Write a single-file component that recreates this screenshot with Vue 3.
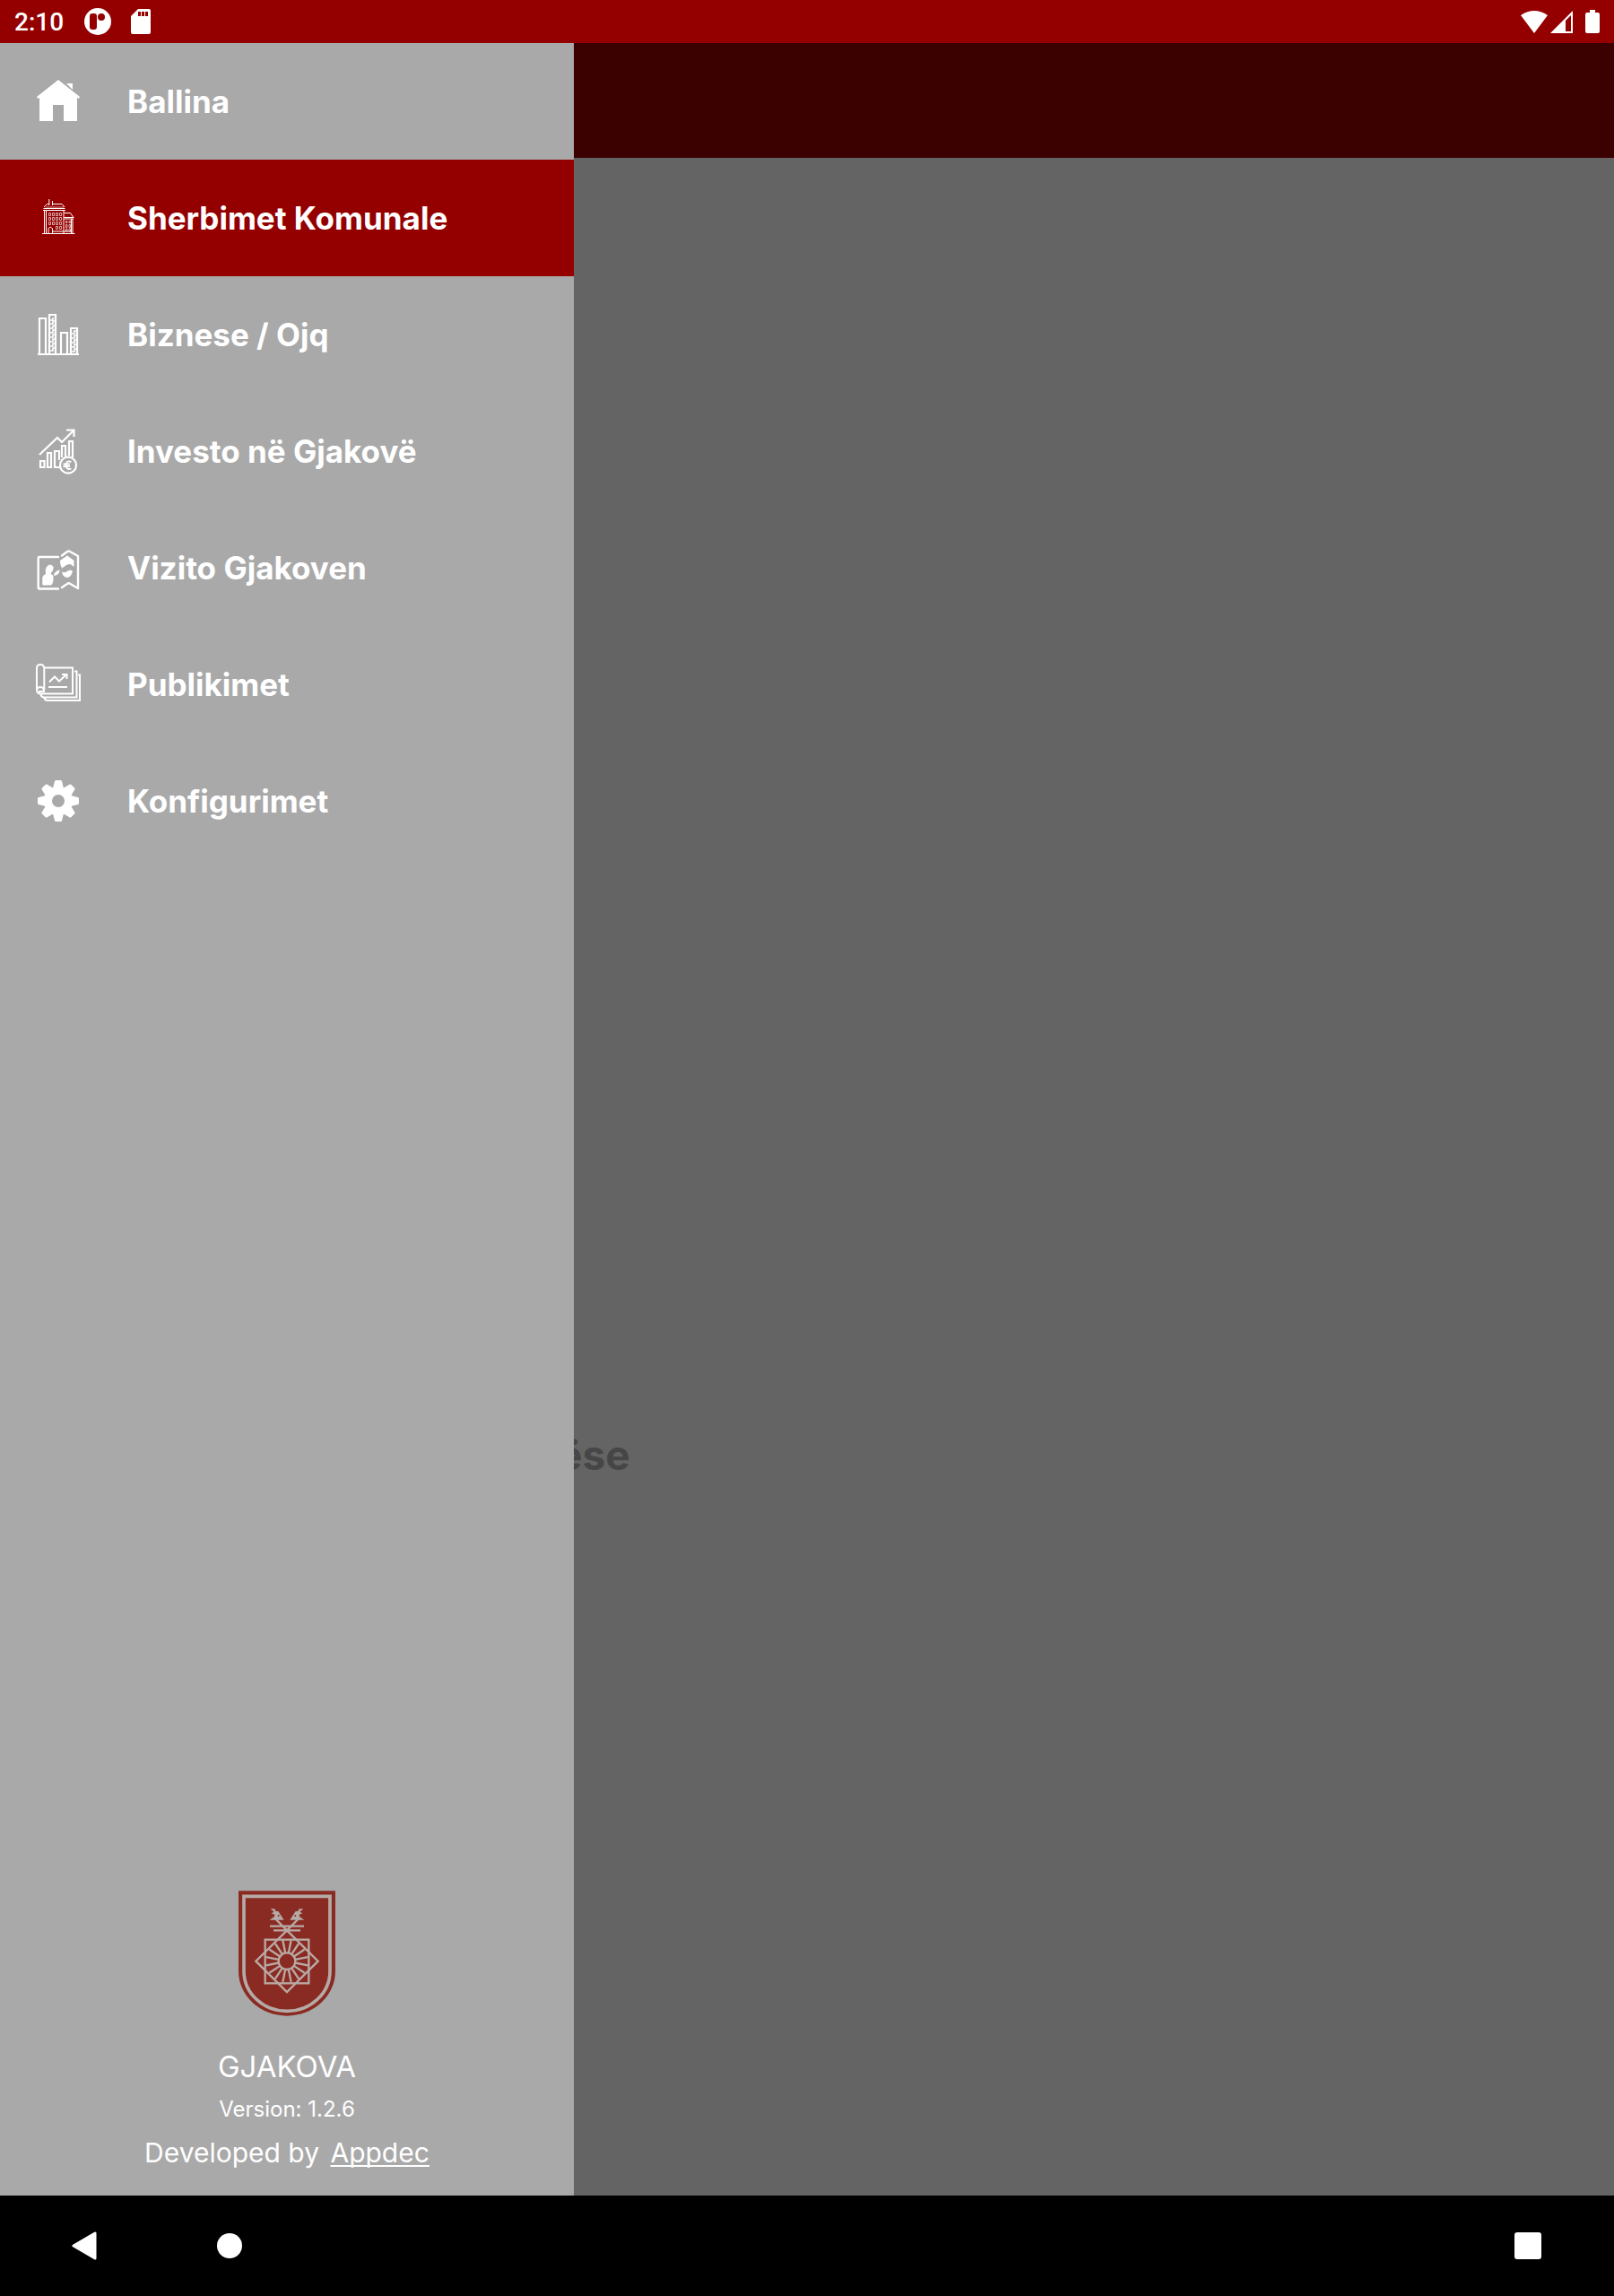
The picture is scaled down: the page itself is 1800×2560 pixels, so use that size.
<template>
  <div class="screen">
    <header class="status-bar">
      <time class="clock">2:10</time>
      <svg class="app-icon" viewBox="0 0 30 30" aria-hidden="true">
        <circle cx="15" cy="15" r="15" fill="#fff" />
        <rect x="6" y="6" width="8" height="18" rx="3" fill="#940000" />
        <circle cx="19" cy="10" r="4" fill="#940000" />
      </svg>
      <svg class="card-icon" viewBox="0 0 22 28" aria-hidden="true">
        <path d="M8 0H20Q22 0 22 2V26Q22 28 20 28H2Q0 28 0 26V8Z" fill="#fff" />
        <path d="M8 3h3v5h-3zM12 3h3v5h-3zM16 3h3v5h-3z" fill="#940000" />
      </svg>
      <div class="status-right">
        <svg class="wifi-icon" viewBox="0 0 30 25" aria-hidden="true">
          <path d="M0 5Q15 -5 30 5L15 25Z" fill="#fff" />
        </svg>
        <svg class="signal-icon" viewBox="0 0 25 25" aria-hidden="true">
          <path d="M25 0V25H0Z" fill="#fff" />
          <path d="M17 11L23 5V23H17Z" fill="#940000" />
        </svg>
        <svg class="battery-icon" viewBox="0 0 16 26" aria-hidden="true">
          <path d="M5 0H11V3H14Q16 3 16 5V24Q16 26 14 26H2Q0 26 0 24V5Q0 3 2 3H5Z" fill="#fff" />
        </svg>
      </div>
    </header>

    <div class="stage">
      <div class="toolbar"></div>
      <main class="content">
        <h1 class="page-text">ëse</h1>
      </main>

      <aside class="drawer">
        <nav class="menu">
          <a
            v-for="item in items"
            :key="item.id"
            href="#"
            class="menu-item"
            :class="{ active: item.id === selected }"
            @click.prevent="selected = item.id"
          >
            <svg class="menu-icon" viewBox="0 0 60 60" aria-hidden="true">
              <g v-if="item.id === 'home'" fill="#fff">
                <path d="M30 6L54 25L53 27L51 26V52H36V34H24V52H9V26L7 27L6 25Z" />
                <path d="M39 10H46V17Z" />
              </g>

              <g v-else-if="item.id === 'services'" fill="none" stroke="#fff">
                <path d="M12 47.5H48.5" stroke-width="1.2" />
                <path d="M14.5 22V47M16.5 22V47M36 22V47M46 31V47M44.5 31V47" />
                <path d="M13 21.5H38M13.5 19.5H37.5M14 18L17.5 14.5H20M24 14.5H34L37 18" />
                <path d="M19.8 9V16M23.5 11V16" />
                <path d="M16 18H36" stroke-opacity="0.6" />
                <path d="M36.5 24.5H43.5L46.5 29M36.5 29.5H47.5M36.5 31H47" />
                <path
                  d="M19.5 24.5h2v3h-2zM23.5 24.5h2v3h-2zM27.5 24.5h2v3h-2zM31.5 24.5h2v3h-2zM19.5 29.5h2v3h-2zM23.5 29.5h2v3h-2zM27.5 29.5h2v3h-2zM31.5 29.5h2v3h-2zM19.5 34.5h2v3h-2zM23.5 34.5h2v3h-2zM27.5 34.5h2v3h-2zM31.5 34.5h2v3h-2zM27.5 39.5h2v3h-2zM31.5 39.5h2v3h-2z"
                  stroke-opacity="0.65"
                />
                <path
                  d="M38.5 33.5h1.5v2h-1.5zM42 33.5h1.5v2h-1.5zM38.5 37.5h1.5v3h-1.5zM42 37.5h1.5v3h-1.5zM38.5 42h1.5v3h-1.5zM42 42h1.5v3h-1.5z"
                  stroke-opacity="0.65"
                />
                <path d="M19 47V42Q21 38.5 23.5 42V47M24 45H44" />
              </g>

              <g v-else-if="item.id === 'business'" fill="none" stroke="#fff" stroke-width="2.2">
                <path d="M7 52H53" />
                <path d="M9 51V12H16V51M20 51V8H27V51M33 51V28H40V51M44 51V23H51V51" />
                <path
                  d="M24 11v3h-3M26 15h-2v3h-3M26 20h-2v3h-3M26 25h-2v3h-3M26 30h-2v3h-3M26 35h-2v3h-3M26 40h-2v3h-3M26 45h-2v3h-3M50 26h-2v3h-3M50 31h-2v3h-3M50 36h-2v3h-3M50 41h-2v3h-3M50 46h-2v3h-3"
                  stroke-width="1.6"
                />
              </g>

              <g v-else-if="item.id === 'invest'" fill="none" stroke="#fff" stroke-width="2.2">
                <path d="M9 34L29 15L34 20L47 7M39 6.5H47.5V14" />
                <path d="M10 41H14.5V48H10ZM18 32H22V48H18ZM31 40V30H26V48H32M34 37V24H38V36M42 35V19H46V37" />
                <circle cx="41" cy="45.7" r="9" />
                <path d="M44.5 42Q39 39.500 38.500 45.7Q39 51.500 44.5 49.500M35.500 44.5H43M35.500 47H43" stroke-width="1.8" />
              </g>

              <g
                v-else-if="item.id === 'visit'"
                fill="none"
                stroke="#fff"
                stroke-width="2.4"
                stroke-linecap="round"
                stroke-linejoin="round"
              >
                <path d="M30 18H9Q7.7 18 7.7 20V52Q7.7 53.5 9 53.5H30" />
                <path d="M34 16.5L40 12Q41.7 11 43 12L52 17V53L43.5 48Q41.7 46.5 40 48L34 52" />
                <g fill="#fff" stroke="none">
                  <path d="M12.3 49V41Q13 38 16 37Q15 31 17.5 28.5C20 25 25.5 27 24.5 31Q24 34 21.5 36.5L24.5 39Q25 47 22 49.5H13Z" />
                  <path d="M25 39Q25 34 31.5 32.5Q31.5 38 25 39Z" />
                  <path d="M32 22L40 16.5L47.5 22V29L43.5 26L40 26.5L34 30.5Q31.5 26 32 22Z" />
                  <path d="M34 34.5Q38 36 40 34Q43 32 46 33.5Q45 40 40 41Q35 41 34 34.5Z" />
                </g>
              </g>

              <g v-else-if="item.id === 'publish'" fill="none" stroke="#fff" stroke-width="2">
                <path d="M14.3 36V12Q14 8 10 8Q6 8 6 12V36Q6 40.5 10.5 40.5H46V11.5H14.5" />
                <path d="M6 36Q7 33 10 33Q14 33 14 38H8" />
                <path d="M48 15.5H50.5V44.5H14Q11 44.5 10.5 41M52 19.5H54V48H18Q15 48 14.5 45" />
                <path d="M20 27.5L26 21.5L31 26.5L38.5 19.5M34 19H39.5V24M19 33H40" />
              </g>

              <g v-else>
                <path
                  v-for="n in 8"
                  :key="n"
                  d="M24 16L26 8Q26.2 7 27.5 7H32.5Q33.8 7 34 8L36 16Z"
                  :transform="`rotate(${n * 45} 30 30)`"
                  fill="#fff"
                />
                <circle cx="30" cy="30" r="11.5" fill="none" stroke="#fff" stroke-width="9" />
              </g>
            </svg>
            <span>{{ item.label }}</span>
          </a>
        </nav>

        <footer class="drawer-footer">
          <svg class="emblem" viewBox="0 0 324 418" role="img" aria-label="Gjakova">
            <path d="M0 0H324V268A162 150 0 0 1 0 268Z" fill="#8a2b23" />
            <path d="M18 18H306V268A144 134 0 0 1 18 268Z" fill="none" stroke="#b5aaa6" stroke-width="11" />
            <g fill="none" stroke="#b9a9a4" stroke-width="7">
              <rect x="89" y="163" width="146" height="146" />
              <path d="M162 132L266 235L162 338L58 235Z" />
              <path d="M166 136L122 92M158 136L202 92M105 118H219M117 132H207" />
              <circle cx="162" cy="235" r="28" />
              <path
                v-for="n in 16"
                :key="n"
                d="M162 207V164"
                :transform="`rotate(${n * 22.5 + 11.25} 162 235)`"
              />
            </g>
            <g fill="#b5aaa6">
              <path d="M107 60H121L125 68H133L152 97H104L120 86L121 79L110 75L119 70Z" />
              <path d="M217 60H203L199 68H191L172 97H220L204 86L203 79L214 75L205 70Z" />
            </g>
            <circle cx="134" cy="83" r="3" fill="#8a2b23" />
            <circle cx="190" cy="83" r="3" fill="#8a2b23" />
          </svg>
          <p class="city">GJAKOVA</p>
          <p class="version">Version: 1.2.6</p>
          <p class="credit">Developed by <a href="#">Appdec</a></p>
        </footer>
      </aside>
    </div>

    <div class="system-nav">
      <button type="button" aria-label="Back">
        <svg viewBox="0 0 32 32">
          <path d="M4 16L28 2V30Z" fill="#fff" stroke="#fff" stroke-width="3" stroke-linejoin="round" />
        </svg>
      </button>
      <button type="button" aria-label="Home">
        <svg viewBox="0 0 32 32"><circle cx="16" cy="16" r="14" fill="#fff" /></svg>
      </button>
      <button type="button" class="recent" aria-label="Recent apps">
        <svg viewBox="0 0 32 32"><rect x="1" y="1" width="30" height="30" rx="3" fill="#fff" /></svg>
      </button>
    </div>
  </div>
</template>

<script setup>
import { ref } from 'vue'

const selected = ref('services')

const items = [
  { id: 'home', label: 'Ballina' },
  { id: 'services', label: 'Sherbimet Komunale' },
  { id: 'business', label: 'Biznese / Ojq' },
  { id: 'invest', label: 'Investo në Gjakovë' },
  { id: 'visit', label: 'Vizito Gjakoven' },
  { id: 'publish', label: 'Publikimet' },
  { id: 'settings', label: 'Konfigurimet' }
]
</script>

<style>
body {
  margin: 0;
}
</style>

<style scoped>
.screen {
  min-height: 100vh;
  display: flex;
  flex-direction: column;
  font-family: Inter, 'Open Sans', sans-serif;
  color: #fff;
}

.status-bar {
  height: 48px;
  box-sizing: border-box;
  padding: 0 16px;
  display: flex;
  align-items: center;
  background: #940000;
}

.clock {
  width: 78px;
  font-family: Roboto, sans-serif;
  font-size: 28px;
  font-weight: 500;
}

.app-icon {
  width: 30px;
  height: 30px;
}

.card-icon {
  width: 22px;
  height: 28px;
  margin-left: 22px;
}

.status-right {
  display: flex;
  align-items: center;
  margin-left: auto;
}

.wifi-icon {
  width: 30px;
  height: 25px;
}

.signal-icon {
  width: 25px;
  height: 25px;
  margin: 0 14px 0 3px;
}

.battery-icon {
  width: 16px;
  height: 26px;
}

.stage {
  position: relative;
  flex: 1;
  display: flex;
  flex-direction: column;
  background: #646464;
}

.toolbar {
  height: 128px;
  background: #3b0000;
}

.content {
  flex: 1;
  display: grid;
  grid-template-rows: 16fr auto 9fr;
  padding-left: 622px;
}

.page-text {
  grid-row: 2;
  margin: 0;
  font-size: 46px;
  line-height: 56px;
  font-weight: 700;
  color: #464646;
}

.drawer {
  position: absolute;
  top: 0;
  bottom: 0;
  left: 0;
  width: 640px;
  max-width: 80%;
  display: flex;
  flex-direction: column;
  justify-content: space-between;
  background: #a9a9a9;
}

.menu {
  display: flex;
  flex-direction: column;
}

.menu-item {
  height: 130px;
  padding-left: 35px;
  display: flex;
  align-items: center;
  gap: 47px;
  color: #fff;
  font-size: 35px;
  font-weight: 700;
  text-decoration: none;
}

.menu-item.active {
  background: #940000;
}

.menu-icon {
  width: 60px;
  height: 60px;
}

.drawer-footer {
  padding-bottom: 24px;
  display: flex;
  flex-direction: column;
  align-items: center;
}

.emblem {
  width: 108px;
  height: 140px;
  margin-bottom: 32px;
}

.drawer-footer p {
  margin: 0;
  line-height: 48px;
}

.city {
  font-size: 33px;
}

.version {
  font-size: 24px;
}

.credit {
  font-size: 30px;
}

.credit a {
  margin-left: 4px;
  color: #fff;
  text-decoration-thickness: 2px;
  text-underline-offset: 3px;
  text-decoration-skip-ink: none;
}

.system-nav {
  height: 112px;
  box-sizing: border-box;
  padding: 0 80px 0 78px;
  display: flex;
  align-items: center;
  gap: 130px;
  background: #000;
}

.system-nav button {
  width: 32px;
  height: 32px;
  padding: 0;
  border: none;
  background: none;
  cursor: pointer;
}

.system-nav svg {
  display: block;
}

.system-nav .recent {
  margin-left: auto;
}
</style>
